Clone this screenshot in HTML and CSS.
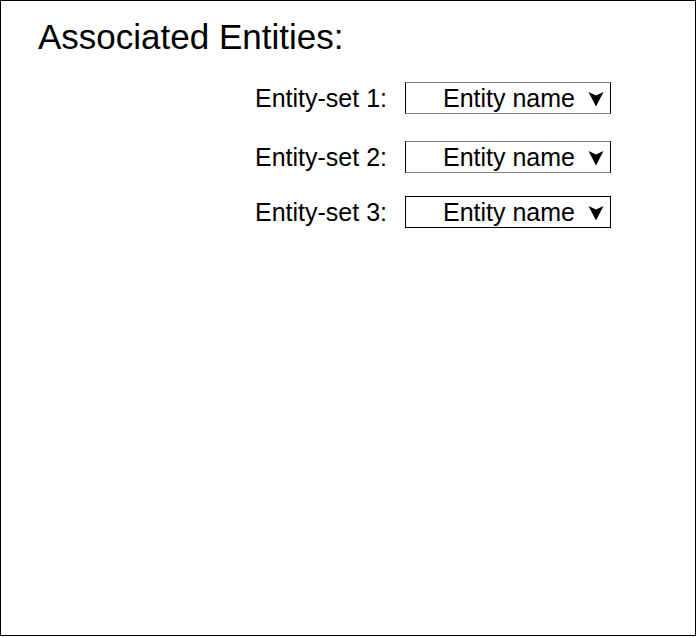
FILE: index.html
```html
<!DOCTYPE html>
<html>
<head>
<meta charset="utf-8">
<link rel="stylesheet" href="styles.css">
</head>
<body>
<div class="panel">
  <h1 class="title">Associated Entities:</h1>
  <div class="rows">
    <div class="row row1">
      <span class="label">Entity-set 1:</span>
      <div class="select soft">
        <span class="value">Entity name</span>
        <svg class="arrow" width="16" height="16" viewBox="0 0 16 16"><path d="M0.5 1 L8 4.5 L15.5 1 L8 15.5 Z" fill="#000"/></svg>
      </div>
    </div>
    <div class="row row2">
      <span class="label">Entity-set 2:</span>
      <div class="select soft">
        <span class="value">Entity name</span>
        <svg class="arrow" width="16" height="16" viewBox="0 0 16 16"><path d="M0.5 1 L8 4.5 L15.5 1 L8 15.5 Z" fill="#000"/></svg>
      </div>
    </div>
    <div class="row row3">
      <span class="label">Entity-set 3:</span>
      <div class="select">
        <span class="value">Entity name</span>
        <svg class="arrow" width="16" height="16" viewBox="0 0 16 16"><path d="M0.5 1 L8 4.5 L15.5 1 L8 15.5 Z" fill="#000"/></svg>
      </div>
    </div>
  </div>
</div>
</body>
</html>
```
FILE: styles.css
```css
html, body {
  margin: 0;
  padding: 0;
  background: #fff;
}
body {
  font-family: "Liberation Sans", Arial, sans-serif;
  color: #000;
}
.panel {
  box-sizing: border-box;
  width: 696px;
  height: 636px;
  border: 1px solid #000;
  padding: 17px 0 0 37px;
}
.title {
  margin: 0;
  font-size: 35px;
  font-weight: normal;
  line-height: 38px;
}
.rows {
  display: flex;
  flex-direction: column;
  padding-left: 217px;
  margin-top: 26px;
}
.row {
  display: flex;
  align-items: center;
  height: 32px;
}
.row2 { margin-top: 27px; }
.row3 { margin-top: 23px; }
.label {
  font-size: 25px;
  width: 150px;
}
.select {
  box-sizing: border-box;
  width: 206px;
  height: 32px;
  border: 1px solid #000;
  display: flex;
  align-items: center;
  padding-left: 37px;
}
.select.soft {
  border-top-color: #808080;
  border-bottom-color: #808080;
}
.value {
  font-size: 25px;
}
.arrow {
  flex: none;
  margin-left: 13px;
  margin-top: 2px;
}
```
